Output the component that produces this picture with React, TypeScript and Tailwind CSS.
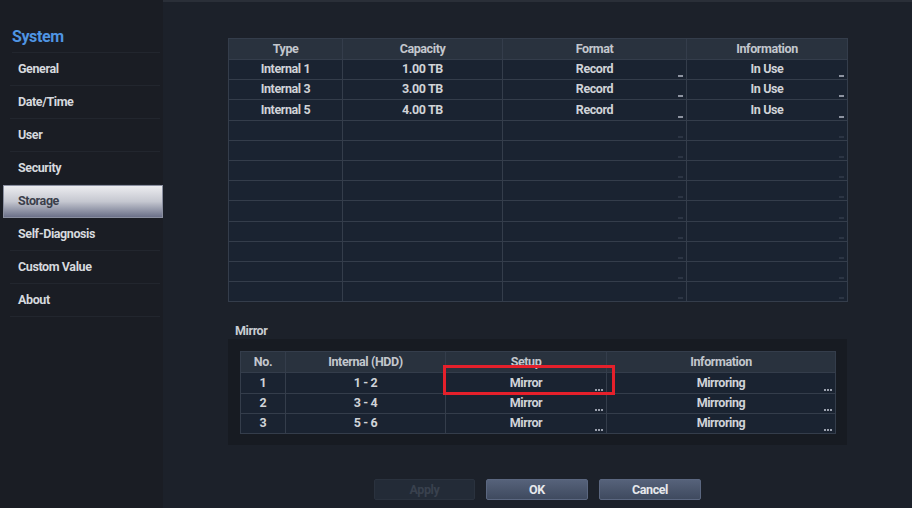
import React from "react";

const font = { fontFamily: "Roboto, 'Liberation Sans', sans-serif" };

const menu = ["General", "Date/Time", "User", "Security", "Storage", "Self-Diagnosis", "Custom Value", "About"];

const storageRows = [
  ["Internal 1", "1.00 TB", "Record", "In Use"],
  ["Internal 3", "3.00 TB", "Record", "In Use"],
  ["Internal 5", "4.00 TB", "Record", "In Use"],
];

const mirrorRows = [
  ["1", "1 - 2", "Mirror", "Mirroring"],
  ["2", "3 - 4", "Mirror", "Mirroring"],
  ["3", "5 - 6", "Mirror", "Mirroring"],
];

function Dash({ faint }: { faint?: boolean }) {
  return (
    <span
      className={
        "absolute right-[3px] bottom-[2px] h-[2px] w-[5px] " + (faint ? "bg-[#2c3544]" : "bg-[#8d93a0]")
      }
    />
  );
}

function Dots() {
  return (
    <span className="absolute right-[3px] bottom-[2px] flex gap-[1px]">
      <span className="h-[2px] w-[2px] bg-[#9aa0ad]" />
      <span className="h-[2px] w-[2px] bg-[#9aa0ad]" />
      <span className="h-[2px] w-[2px] bg-[#9aa0ad]" />
    </span>
  );
}

export default function App() {
  const empty = Array.from({ length: 9 });
  return (
    <div
      className="flex h-[508px] w-[912px] overflow-hidden bg-[#1c212a] text-[12.5px] font-bold tracking-[-0.4px] text-[#d0d3d8]"
      style={font}
    >
      {/* Sidebar */}
      <div className="flex w-[163px] shrink-0 flex-col bg-[#1a1d24] pt-[27px]">
        <div className="ml-[12px] mr-[3px] h-[26px] border-b border-[#22262e] text-[16px] leading-[20px] text-[#4f95e3]">
          System
        </div>
        {menu.map((m) => {
          const sel = m === "Storage";
          return sel ? (
            <div
              key={m}
              className="ml-[3px] flex h-[33px] items-center border border-[#8a8fa0] bg-gradient-to-b from-[#ecedf0] via-[#c5c7d0] to-[#6c7189] pl-[14px] text-[#3b3f4b]"
            >
              {m}
            </div>
          ) : (
            <div
              key={m}
              className="ml-[10px] mr-[3px] flex h-[33px] items-center border-b border-[#22262e] pl-[8px] text-[#d6d9de]"
            >
              {m}
            </div>
          );
        })}
      </div>

      {/* Main */}
      <div className="flex flex-1 flex-col border-t-2 border-[#2a2f38] pl-[65px] pt-[36px]">
        <table className="w-[619px] table-fixed border-collapse text-center">
          <colgroup>
            <col className="w-[114px]" />
            <col className="w-[160px]" />
            <col className="w-[184px]" />
            <col className="w-[161px]" />
          </colgroup>
          <thead>
            <tr className="h-[21px] bg-[#29323e] text-[#c3c7cd]">
              {["Type", "Capacity", "Format", "Information"].map((h) => (
                <th key={h} className="border border-[#343d4b] p-0 font-bold">
                  {h}
                </th>
              ))}
            </tr>
          </thead>
          <tbody>
            {storageRows.map((r, i) => (
              <tr key={i} className="h-[20.2px] bg-[#1a2331]">
                <td className="border border-[#343d4b] p-0">{r[0]}</td>
                <td className="border border-[#343d4b] p-0">{r[1]}</td>
                <td className="relative border border-[#343d4b] p-0">
                  {r[2]}
                  <Dash />
                </td>
                <td className="relative border border-[#343d4b] p-0">
                  {r[3]}
                  <Dash />
                </td>
              </tr>
            ))}
            {empty.map((_, i) => (
              <tr key={"e" + i} className="h-[20.2px] bg-[#1a2331]">
                <td className="border border-[#343d4b] p-0" />
                <td className="border border-[#343d4b] p-0" />
                <td className="relative border border-[#343d4b] p-0">
                  <Dash faint />
                </td>
                <td className="relative border border-[#343d4b] p-0">
                  <Dash faint />
                </td>
              </tr>
            ))}
          </tbody>
        </table>

        <div className="mt-[22px] pl-[7px] leading-[14px] text-[#c9cdd3]">Mirror</div>

        <div className="relative mt-[1px] w-[619px] bg-[#171b22] px-[12px] pb-[11px] pt-[12px]">
          <table className="w-[595px] table-fixed border-collapse text-center">
            <colgroup>
              <col className="w-[45px]" />
              <col className="w-[160px]" />
              <col className="w-[161px]" />
              <col className="w-[229px]" />
            </colgroup>
            <thead>
              <tr className="h-[21px] bg-[#29323e] text-[#c3c7cd]">
                {["No.", "Internal (HDD)", "Setup", "Information"].map((h) => (
                  <th key={h} className="border border-[#343d4b] p-0 font-bold">
                    {h}
                  </th>
                ))}
              </tr>
            </thead>
            <tbody>
              {mirrorRows.map((r, i) => (
                <tr key={i} className="h-[20.4px] bg-[#1a2331]">
                  <td className="border border-[#343d4b] p-0">{r[0]}</td>
                  <td className="border border-[#343d4b] p-0">{r[1]}</td>
                  <td className="relative border border-[#343d4b] p-0">
                    {r[2]}
                    <Dots />
                  </td>
                  <td className="relative border border-[#343d4b] p-0">
                    {r[3]}
                    <Dots />
                  </td>
                </tr>
              ))}
            </tbody>
          </table>
          <div className="pointer-events-none absolute left-[215px] top-[26px] h-[30px] w-[172px] border-[3px] border-[#e5202b]" />
        </div>

        <div className="mt-[34px] flex justify-center gap-[11px] pr-[65px]">
          <button className="h-[21px] w-[101px] rounded-[2px] border border-[#2a323e] bg-[#232b37] text-[12.5px] font-bold text-[#39414e]">
            Apply
          </button>
          <button className="h-[21px] w-[102px] rounded-[2px] border border-[#5b6780] bg-gradient-to-b from-[#56627a] to-[#3f4a5f] text-[12.5px] font-bold text-[#e6e8ec]">
            OK
          </button>
          <button className="h-[21px] w-[102px] rounded-[2px] border border-[#5b6780] bg-gradient-to-b from-[#56627a] to-[#3f4a5f] text-[12.5px] font-bold text-[#e6e8ec]">
            Cancel
          </button>
        </div>
      </div>
    </div>
  );
}
